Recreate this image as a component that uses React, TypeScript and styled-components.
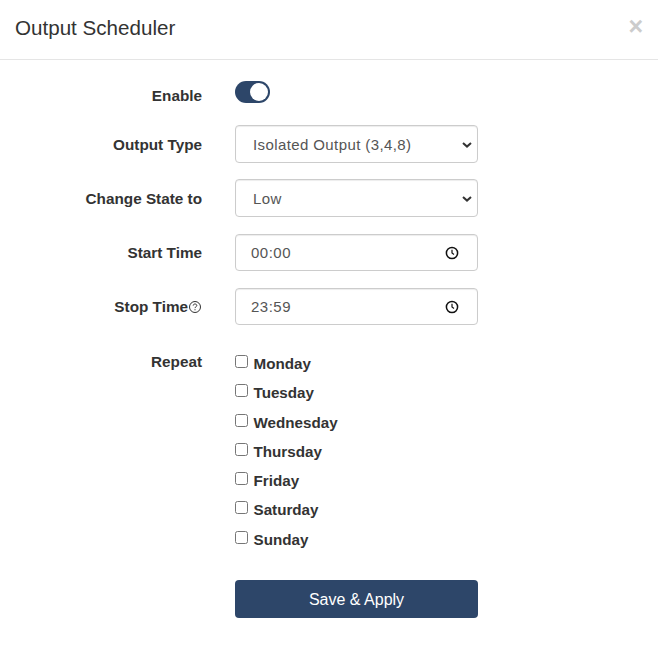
import styled, { createGlobalStyle } from "styled-components";

const GlobalStyle = createGlobalStyle`
  html, body {
    margin: 0;
    background: #fff;
    font-family: "Liberation Sans", Arial, sans-serif;
    color: #333;
  }
  * { box-sizing: border-box; }
`;

const Modal = styled.div`
  width: 658px;
  height: 649px;
  background: #fff;
`;

const Header = styled.header`
  height: 60px;
  padding: 0 15px;
  display: flex;
  align-items: center;
  justify-content: space-between;
  border-bottom: 1px solid #e5e5e5;
`;

const Title = styled.h4`
  margin: 0 0 3px;
  font-size: 20.6px;
  font-weight: 400;
  line-height: 24px;
  color: #333;
`;

const Close = styled.button`
  border: 0;
  padding: 0;
  margin: 0 0 6px;
  background: none;
  color: #ccc;
  font-family: "Liberation Sans", Arial, sans-serif;
  font-size: 25px;
  font-weight: 700;
  line-height: 1;
`;

const Form = styled.form`
  display: flex;
  flex-direction: column;
  padding-top: 18px;
`;

const Row = styled.div<{ $height: number; $gap: number }>`
  display: grid;
  grid-template-columns: 202px 243px;
  column-gap: 33px;
  align-items: center;
  height: ${(p) => p.$height}px;
  margin-bottom: ${(p) => p.$gap}px;
`;

const Label = styled.label<{ $nudge?: number }>`
  text-align: right;
  font-size: 15.3px;
  font-weight: 700;
  color: #333;
  line-height: 20px;
  padding-top: ${(p) => p.$nudge ?? 0}px;
  display: flex;
  justify-content: flex-end;
  align-items: center;
`;

const Switch = styled.span`
  display: flex;
  justify-content: flex-end;
  align-items: center;
  width: 35px;
  height: 22px;
  padding: 2px;
  border-radius: 11px;
  background: #2d4669;
`;

const Knob = styled.span`
  width: 18px;
  height: 18px;
  border-radius: 50%;
  background: #fff;
`;

const SelectWrap = styled.div`
  position: relative;
  height: 38px;
`;

const Select = styled.select`
  width: 100%;
  height: 38px;
  padding: 6px 13px 6px 17px;
  appearance: none;
  font-family: "Liberation Sans", Arial, sans-serif;
  font-size: 15px;
  letter-spacing: 0.4px;
  color: #555;
  background: #fff;
  border: 1px solid #ccc;
  border-radius: 4px;
  box-shadow: inset 0 1px 1px rgba(0, 0, 0, 0.075);
`;

const Chevron = styled.svg`
  position: absolute;
  right: 6px;
  top: 17px;
  pointer-events: none;
`;

const TimeBox = styled.div`
  height: 37px;
  padding: 0 18px 0 15px;
  display: flex;
  align-items: center;
  justify-content: space-between;
  border: 1px solid #ccc;
  border-radius: 4px;
  box-shadow: inset 0 1px 1px rgba(0, 0, 0, 0.075);
`;

const TimeValue = styled.input`
  width: 80px;
  border: 0;
  padding: 0;
  outline: 0;
  background: none;
  font-family: "Liberation Sans", Arial, sans-serif;
  font-size: 15px;
  letter-spacing: 0.5px;
  color: #555;
`;

const RepeatRow = styled.div`
  display: grid;
  grid-template-columns: 202px 243px;
  column-gap: 33px;
  align-items: start;
`;

const Days = styled.div`
  display: flex;
  flex-direction: column;
`;

const Day = styled.label`
  display: flex;
  align-items: flex-start;
  height: 29.3px;
  font-size: 15.2px;
  font-weight: 700;
  line-height: 20px;
  color: #333;
`;

const Check = styled.input`
  width: 13px;
  height: 13px;
  margin: 3px 5.5px 0 0;
  flex: none;
`;

const DayName = styled.span`
  padding-top: 2px;
`;

const Actions = styled.div`
  display: grid;
  grid-template-columns: 243px;
  padding-left: 235px;
  margin-top: 23px;
`;

const Save = styled.button`
  height: 38px;
  padding: 2px 0 0;
  border: 0;
  border-radius: 4px;
  background: #2d4669;
  color: #fff;
  font-family: "Liberation Sans", Arial, sans-serif;
  font-size: 16px;
  font-weight: 400;
`;

const SelectArrow = () => (
  <Chevron width="10" height="6" viewBox="0 0 10 6" fill="none" stroke="#333" strokeWidth="2">
    <path d="M1 1l4 3.6L9 1" />
  </Chevron>
);

const Clock = () => (
  <svg width="14" height="14" viewBox="0 0 14 14" fill="none" stroke="#111" strokeWidth="1.5">
    <circle cx="7" cy="7" r="5.6" />
    <path d="M7 3.8V7l2 1.4" strokeWidth="1.2" />
  </svg>
);

const Help = () => (
  <svg width="14" height="14" viewBox="0 0 14 14" fill="none" stroke="#333" strokeWidth="1">
    <circle cx="7" cy="7" r="5.5" />
    <path d="M5.2 5.6c0-1 .8-1.6 1.8-1.6s1.8.6 1.8 1.5c0 1.3-1.8 1.3-1.8 2.6" />
    <path d="M7 9.2v1.1" />
  </svg>
);

const days = ["Monday", "Tuesday", "Wednesday", "Thursday", "Friday", "Saturday", "Sunday"];

export default function App() {
  return (
    <Modal>
      <GlobalStyle />
      <Header>
        <Title>Output Scheduler</Title>
        <Close type="button">×</Close>
      </Header>
      <Form>
        <Row $height={24} $gap={23}>
          <Label $nudge={8}>Enable</Label>
          <Switch>
            <Knob />
          </Switch>
        </Row>
        <Row $height={38} $gap={16}>
          <Label $nudge={2}>Output Type</Label>
          <SelectWrap>
            <Select defaultValue="iso">
              <option value="iso">Isolated Output (3,4,8)</option>
            </Select>
            <SelectArrow />
          </SelectWrap>
        </Row>
        <Row $height={38} $gap={17}>
          <Label $nudge={2}>Change State to</Label>
          <SelectWrap>
            <Select defaultValue="low">
              <option value="low">Low</option>
              <option value="high">High</option>
            </Select>
            <SelectArrow />
          </SelectWrap>
        </Row>
        <Row $height={37} $gap={17}>
          <Label>Start Time</Label>
          <TimeBox>
            <TimeValue defaultValue="00:00" />
            <Clock />
          </TimeBox>
        </Row>
        <Row $height={37} $gap={27}>
          <Label>
            Stop Time
            <Help />
          </Label>
          <TimeBox>
            <TimeValue defaultValue="23:59" />
            <Clock />
          </TimeBox>
        </Row>
        <RepeatRow>
          <Label>Repeat</Label>
          <Days>
            {days.map((d) => (
              <Day key={d}>
                <Check type="checkbox" />
                <DayName>{d}</DayName>
              </Day>
            ))}
          </Days>
        </RepeatRow>
        <Actions>
          <Save type="button">Save &amp; Apply</Save>
        </Actions>
      </Form>
    </Modal>
  );
}
